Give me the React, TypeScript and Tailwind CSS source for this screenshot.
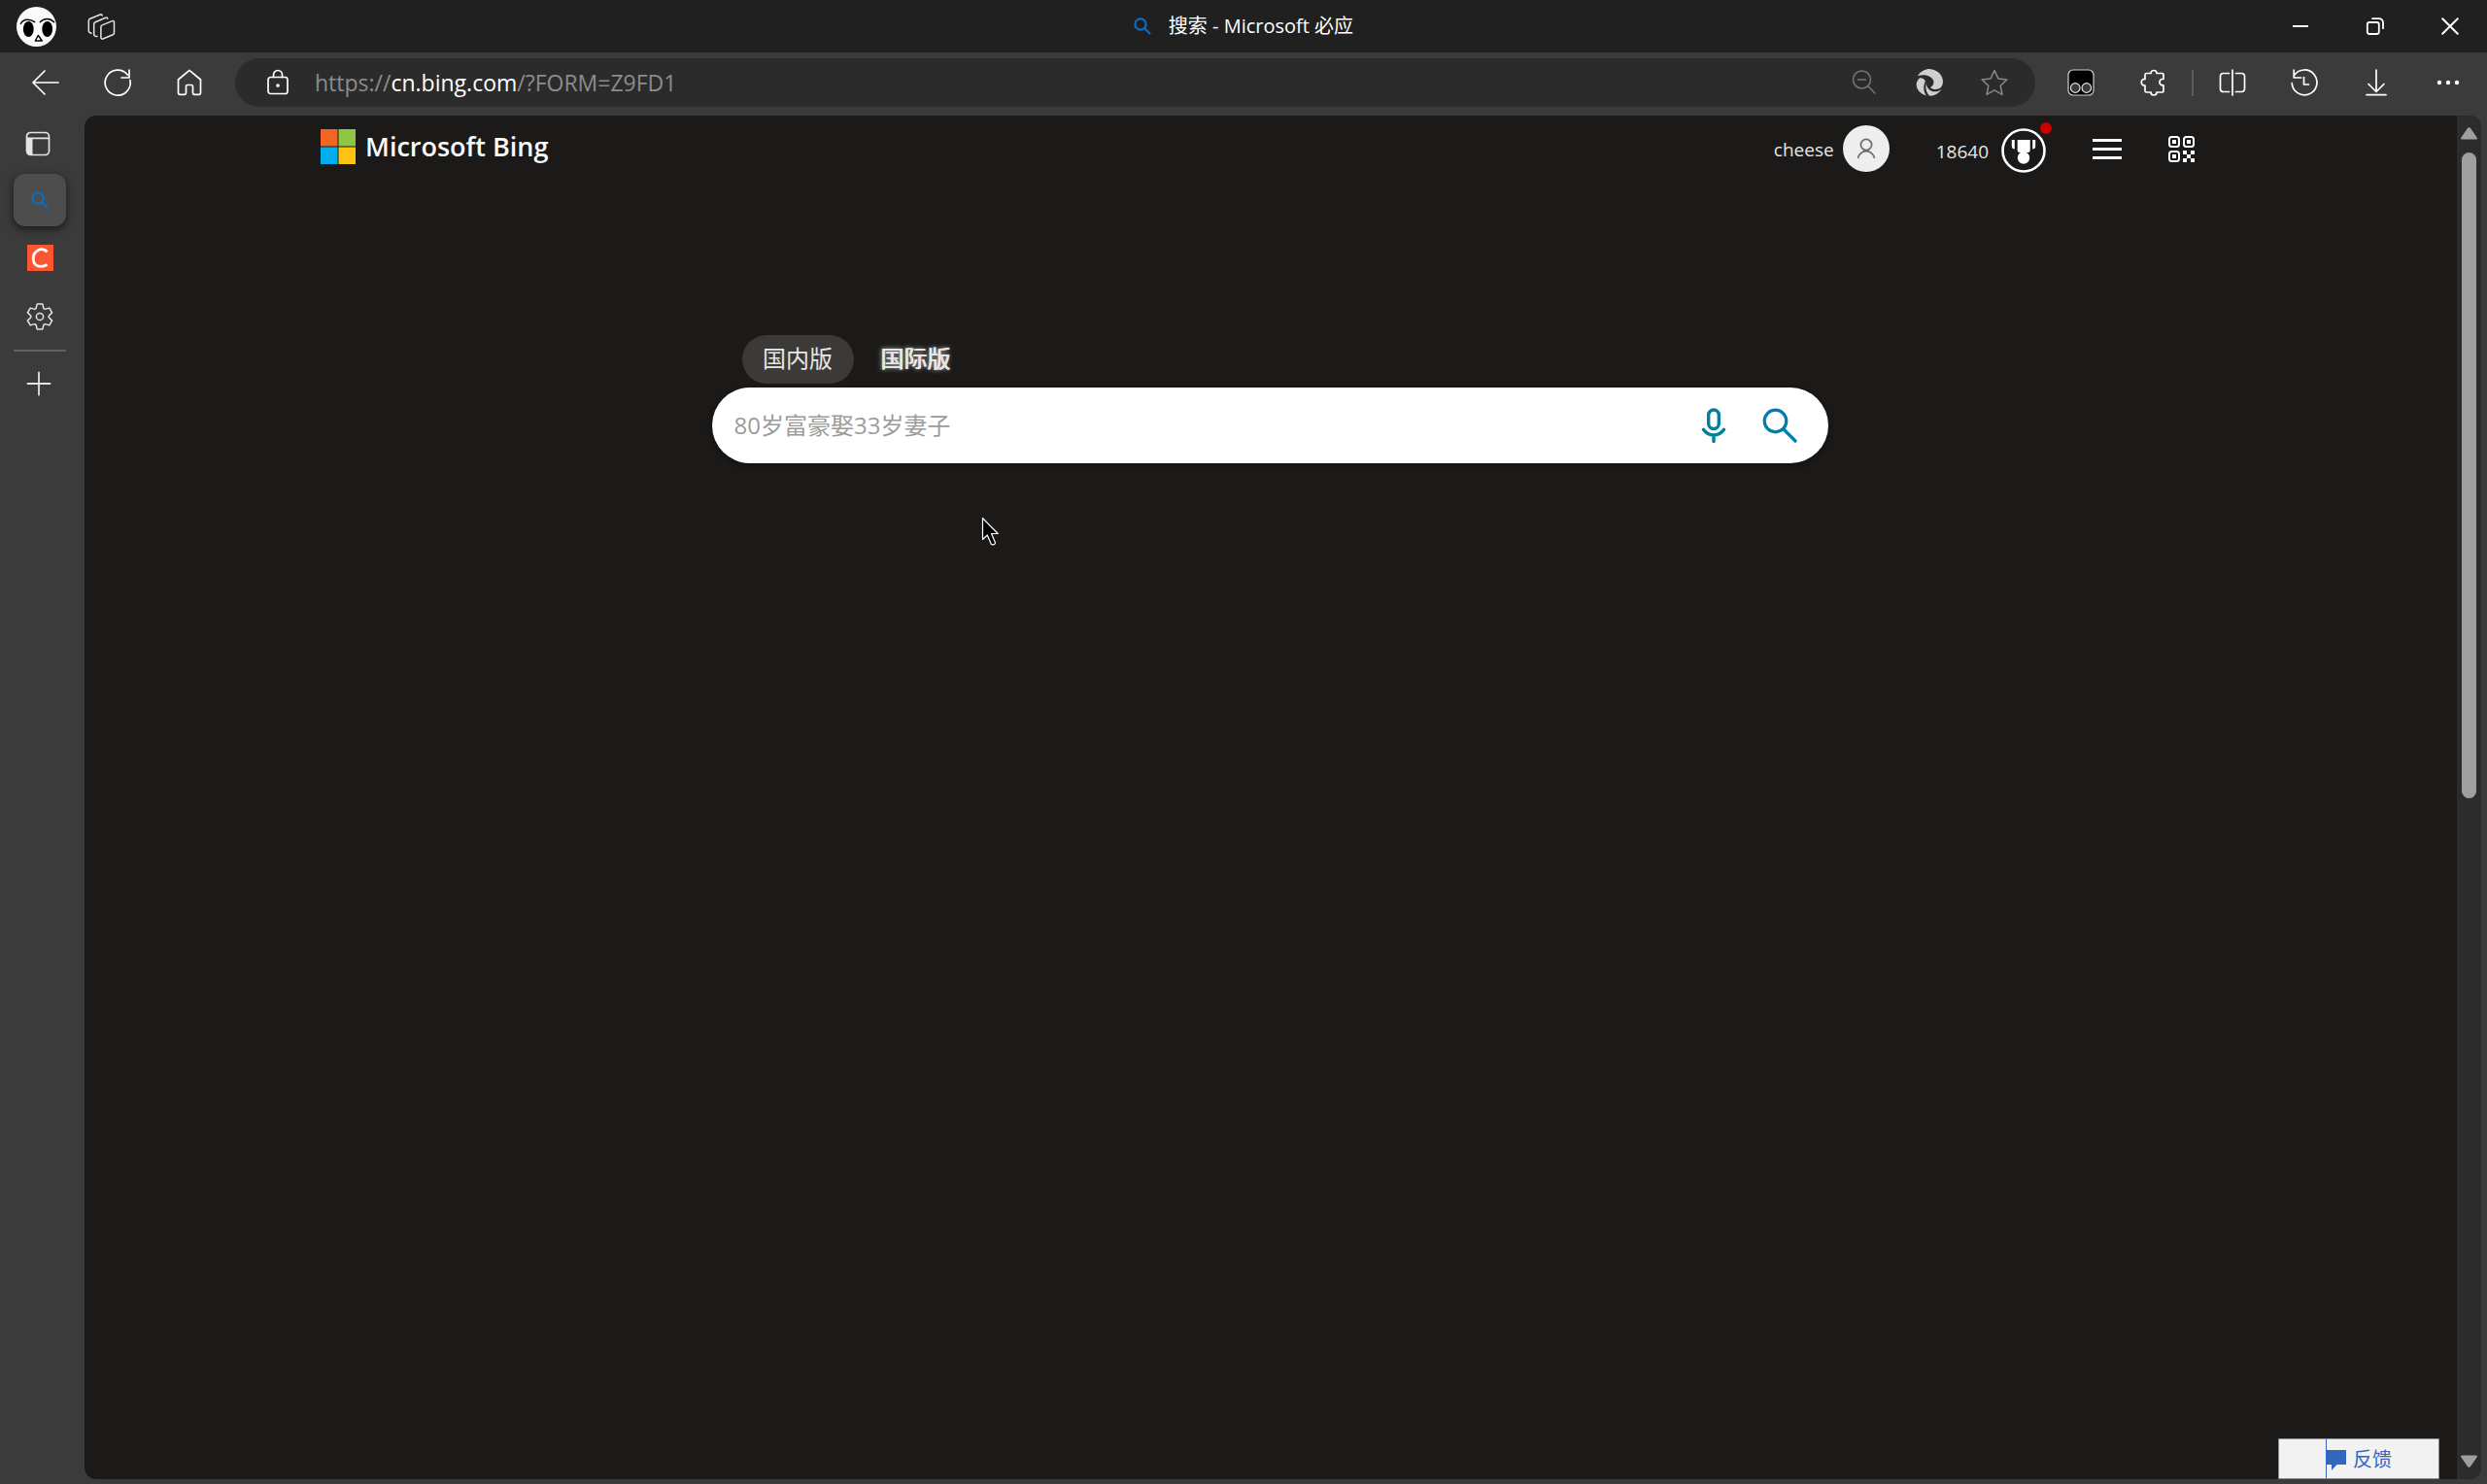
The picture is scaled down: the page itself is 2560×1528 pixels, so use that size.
import { useState } from 'react';
import type { ReactNode } from 'react';

type IconProps = {
  children: ReactNode;
  size?: string;
  box?: string;
  width?: number;
};

/** Line icon on a 28 unit grid, stroked in the current colour. */
function Icon({ children, size = 'size-7', box = '0 0 28 28', width = 1.7 }: IconProps) {
  return (
    <svg
      className={`${size} shrink-0`}
      viewBox={box}
      fill="none"
      stroke="currentColor"
      strokeWidth={width}
      strokeLinecap="round"
      strokeLinejoin="round"
      aria-hidden="true"
    >
      {children}
    </svg>
  );
}

type ButtonProps = { label: string; className: string; children: ReactNode };

function IconButton({ label, className, children }: ButtonProps) {
  return (
    <button
      type="button"
      aria-label={label}
      className={`flex shrink-0 items-center justify-center ${className}`}
    >
      {children}
    </button>
  );
}

function BlueSearch() {
  return (
    <span className="text-[#0f6cbd]">
      <Icon size="size-[18px]" box="0 0 18 18" width={2.2}>
        <circle cx="7" cy="7" r="5.6" />
        <path d="m11.2 11.2 5.3 5.3" />
      </Icon>
    </span>
  );
}

function TitleBar() {
  return (
    <header className="grid h-[54px] shrink-0 grid-cols-[1fr_auto_1fr] items-center bg-[#202020]">
      <div className="flex items-center gap-8 pl-[17px]">
        <button type="button" aria-label="Profile">
          <svg className="size-[41px]" viewBox="0 0 41 41" aria-hidden="true">
            <circle cx="20.5" cy="20.5" r="20.5" fill="#fafafa" />
            <ellipse cx="12.3" cy="23" rx="5.4" ry="8" />
            <ellipse cx="31.7" cy="23" rx="5.4" ry="8" />
            <g fill="none" stroke="#000" strokeWidth="1.4" strokeLinecap="round">
              <path d="M4.3 17.5c2.5-5.2 9-5.5 14.4-1.8M24.3 15.7c4-4.2 10-4.5 14.3 0" />
              <path d="m22.3 29.5-3 5.500h7Z" strokeLinejoin="round" />
            </g>
          </svg>
        </button>
        <IconButton label="Workspaces" className="text-[#e2e2e2]">
          <Icon size="size-[29px]" box="0 0 29 29" width={1.5}>
            <path d="M15.2 12.9 25.5 8.6a1.400 1.400 0 0 1 2 1.300v11a2 2 0 0 1-1.300 1.900l-10.300 4.200a1.400 1.400 0 0 1-2-1.300V14.800a2 2 0 0 1 1.300-1.900Z" />
            <path d="M10 24.600 8.200 24.200a2 2 0 0 1-1.500-2V12a2.500 2.500 0 0 1 1.500-2.200L18.700 5.300a1.600 1.600 0 0 1 2.100.9" />
            <path d="M4 21.300 2.700 20.800a2 2 0 0 1-1.400-2V8.500a2.500 2.500 0 0 1 1.500-2.200L13.200 2a1.600 1.600 0 0 1 2.100.9" />
          </Icon>
        </IconButton>
      </div>
      <div className="flex items-center gap-[18px] text-[20px] leading-6 text-white">
        <BlueSearch />
        <h1>搜索 - Microsoft 必应</h1>
      </div>
      <div className="flex justify-end text-white">
        <IconButton label="Minimize" className="h-[54px] w-[77px]">
          <Icon size="size-5" box="0 0 20 20" width={2}>
            <path d="M2 10h16" strokeLinecap="butt" />
          </Icon>
        </IconButton>
        <IconButton label="Restore" className="h-[54px] w-[77px]">
          <Icon size="size-5" box="0 0 20 20" width={1.8}>
            <rect x="1.8" y="6" width="12" height="12" rx="2.2" />
            <path d="M7 2.200h7a4 4 0 0 1 4 4v6" />
          </Icon>
        </IconButton>
        <IconButton label="Close" className="h-[54px] w-[77px]">
          <Icon size="size-5" box="0 0 20 20" width={2}>
            <path d="m2.200 2.200 15.600 15.600M17.800 2.200 2.200 17.800" />
          </Icon>
        </IconButton>
      </div>
    </header>
  );
}

function AddressBar() {
  return (
    <div className="flex h-[50px] min-w-0 flex-1 items-center rounded-full bg-[#2b2b2b] pr-[9px] pl-[30px]">
      <IconButton label="Site information" className="text-white">
        <Icon>
          <rect x="4" y="8.5" width="20" height="17" rx="2.5" />
          <path d="M9.500 8.500V6a4.500 4.500 0 0 1 9 0v2.500" />
          <circle cx="14" cy="17" r="1" fill="currentColor" />
        </Icon>
      </IconButton>
      <div className="min-w-0 flex-1 truncate pl-6 text-[23px] leading-8 text-[#8c8c8c]">
        https://<span className="text-white">cn.bing.com</span>/?FORM=Z9FD1
      </div>
      <IconButton label="Zoom" className="w-[67px] text-[#767676]">
        <Icon width={1.5}>
          <circle cx="11.500" cy="11" r="9" />
          <path d="M7.500 11h8M18 17.800l7 7.200" />
        </Icon>
      </IconButton>
      <IconButton label="Refresh in original mode" className="w-[67px] text-[#cfcfcf]">
        <svg className="size-7" viewBox="0 0 27 27" fill="currentColor" aria-hidden="true">
          <path d="M2 7C5.500 1.500 10.500-.3 15 .2c7 .8 12 6.300 12 12.300 0 3.500-1.500 6-4 7-3 1.300-6.500.7-8.500-1 2.500-1.500 4-4 3-7C16 7.500 9.500 4.500 2 7Z" />
          <path d="M3.500 9.300C-2 14 .5 23.500 10.300 26.500 7.500 22 7.200 17 9.500 12 8 9.500 5.500 8.500 3.500 9.300Z" />
          <path d="M10.500 14.500c.2 4.500 4 8 8.500 8 2.500 0 4.800-1 6.500-2.500C23 24.500 18 27.200 13.300 26.600c-3-3.600-4-8-2.800-12.100Z" />
        </svg>
      </IconButton>
      <IconButton label="Add to favorites" className="w-[67px] text-[#8a8a8a]">
        <Icon width={1.5}>
          <path d="m14 1.500 3.900 8.400 9 1.100-6.700 6.300 1.800 9-8-4.500-8 4.500 1.800-9L1.100 11l9-1.100Z" />
        </Icon>
      </IconButton>
    </div>
  );
}

function Toolbar() {
  return (
    <nav className="flex h-[65px] shrink-0 items-center pr-[3px] pb-[3px] pl-[10px] text-white">
      <IconButton label="Back" className="w-[74px]">
        <Icon>
          <path d="M27 14H1M13 2 1 14l12 12" />
        </Icon>
      </IconButton>
      <IconButton label="Refresh" className="w-[74px]">
        <Icon>
          <path d="M26.900 11.500A13 13 0 1 1 24.300 6M26 1v8h-8" />
        </Icon>
      </IconButton>
      <IconButton label="Home" className="mr-[10px] w-[74px]">
        <Icon>
          <path d="M2.500 11 14 1.300 25.500 11v13.800a1.500 1.500 0 0 1-1.500 1.500h-5a1.500 1.500 0 0 1-1.500-1.500V18a1.500 1.500 0 0 0-1.500-1.500h-4a1.500 1.500 0 0 0-1.500 1.500v6.800A1.500 1.500 0 0 1 9 26.300H4a1.500 1.500 0 0 1-1.500-1.500Z" />
        </Icon>
      </IconButton>
      <AddressBar />
      <IconButton label="Tampermonkey" className="ml-[10px] w-[74px]">
        <Icon width={1.2}>
          <rect x="1" y="1" width="26" height="26" rx="5" fill="#000" stroke="#d0d0d0" />
          <circle cx="8.200" cy="19.500" r="4.800" fill="#3b3b3b" stroke="#e5e5e5" />
          <circle cx="19.800" cy="19.500" r="4.800" fill="#3b3b3b" stroke="#e5e5e5" />
        </Icon>
      </IconButton>
      <IconButton label="Extensions" className="w-[74px]">
        <Icon>
          <path d="M7.500 4.500H12a3 3 0 0 1 6 0h5.500A1.500 1.500 0 0 1 25 6v4.300h-.8a3.300 3.300 0 0 0 0 6.600h.8v5.600a1.500 1.500 0 0 1-1.500 1.500H18a3 3 0 0 1-6 0H7.500A1.500 1.500 0 0 1 6 22.500V17h-.5a3.300 3.300 0 0 1 0-6.600H6V6a1.500 1.500 0 0 1 1.500-1.500Z" />
        </Icon>
      </IconButton>
      <div className="mx-[3px] h-[27px] w-0.5 bg-[#5c5c5c]" />
      <IconButton label="Split screen" className="w-[74px]">
        <Icon>
          <path d="M10.500 4.500h-6a3 3 0 0 0-3 3v13a3 3 0 0 0 3 3h6M17.500 4.500h6a3 3 0 0 1 3 3v13a3 3 0 0 1-3 3h-6M14 1v26" />
        </Icon>
      </IconButton>
      <IconButton label="History" className="w-[74px]">
        <Icon>
          <path d="M1.200 14.500A12.900 12.900 0 1 0 3.500 6.500M3.200 1v8h7.500M13.500 8.500V16h5" />
        </Icon>
      </IconButton>
      <IconButton label="Downloads" className="w-[74px]">
        <Icon>
          <path d="M14 1v22M6 15.500l8 8 8-8M4 26.700h20" />
        </Icon>
      </IconButton>
      <IconButton label="Settings and more" className="w-[74px]">
        <Icon width={0}>
          <g fill="currentColor">
            <circle cx="5" cy="14" r="2.200" />
            <circle cx="14" cy="14" r="2.200" />
            <circle cx="23" cy="14" r="2.200" />
          </g>
        </Icon>
      </IconButton>
    </nav>
  );
}

function TabRail() {
  return (
    <aside className="flex w-[87px] shrink-0 flex-col pt-0.5 pl-[14px] text-[#e4e4e4]">
      <IconButton label="Tab actions" className="mb-1 h-[54px] w-[50px]">
        <Icon>
          <rect x="2.500" y="2.500" width="23" height="23" rx="4" />
          <path d="M3 8.300h22" />
          <path d="M2.500 8.300H8.500v17H6a3.500 3.500 0 0 1-3.500-3.500Z" fill="currentColor" stroke="none" />
        </Icon>
      </IconButton>
      <IconButton
        label="搜索 - Microsoft 必应"
        className="mb-[5px] size-[54px] rounded-xl bg-[#4d4d4d] shadow-[0_3px_8px_rgba(0,0,0,0.6)]"
      >
        <BlueSearch />
      </IconButton>
      <IconButton label="C" className="mb-[7px] size-[54px]">
        <svg className="size-[27px]" viewBox="0 0 27 27" aria-hidden="true">
          <rect width="27" height="27" fill="#fc5531" />
          <path
            d="M20.500 7.300C18.500 4.600 14.500 4 11.500 5.600 8 7.500 6 11 6.200 15c.3 4.500 3.500 7.400 8 7.300 2.300 0 4.500-.6 6.300-2"
            fill="none"
            stroke="#fff"
            strokeWidth="2.800"
          />
        </svg>
      </IconButton>
      <IconButton label="Settings" className="mb-[7px] size-[54px]">
        <Icon box="-14 -14 28 28" width={1.5}>
          <path d="M-2.800-12.900H2.800L4-8.300 5.200-7.600 9.800-8.900 12.600-4.100 9.200-.7V.7L12.600 4.100 9.800 8.900 5.200 7.600 4 8.300 2.800 12.900H-2.800L-4 8.300-5.200 7.600-9.800 8.900-12.600 4.100-9.200.7V-.7L-12.600-4.100-9.800-8.900-5.200-7.600-4-8.300Z" />
          <circle r="3.600" />
        </Icon>
      </IconButton>
      <div className="mb-1.5 h-0.5 w-[54px] bg-[#606060]" />
      <IconButton label="New tab" className="h-[54px] w-[52px]">
        <Icon width={1.8}>
          <path d="M14 2.500v23M2.500 14h23" />
        </Icon>
      </IconButton>
    </aside>
  );
}

function QrCorner({ x, y }: { x: number; y: number }) {
  return (
    <g transform={`translate(${x} ${y})`}>
      <rect x="1" y="1" width="10" height="10" rx="2.500" fill="none" stroke="currentColor" strokeWidth="2" />
      <rect x="4" y="4" width="4" height="4" fill="currentColor" />
    </g>
  );
}

function BingHeader() {
  return (
    <header className="flex h-[68px] shrink-0 items-center justify-between pr-[270px] pl-[243px] text-[#e6e6e6]">
      <a href="#bing" className="flex items-center gap-[10px] pb-1 text-[27px] leading-9 font-semibold text-[#fafafa]">
        <svg className="size-9" viewBox="0 0 36 36" aria-hidden="true">
          <rect width="17.500" height="17.500" fill="#f26522" />
          <rect x="18.500" width="17.500" height="17.500" fill="#8dc63f" />
          <rect y="18.500" width="17.500" height="17.500" fill="#00aeef" />
          <rect x="18.500" y="18.500" width="17.500" height="17.500" fill="#ffc20e" />
        </svg>
        Microsoft Bing
      </a>
      <div className="flex items-center gap-12 text-[19px] leading-6">
        <a href="#account" className="flex items-center gap-[9px]">
          <span className="pt-0.5">cheese</span>
          <svg className="size-12" viewBox="0 0 48 48" aria-hidden="true">
            <circle cx="24" cy="24" r="24" fill="#eee" />
            <g fill="none" stroke="#6b6b6b" strokeWidth="1.700">
              <circle cx="24" cy="20" r="5.600" />
              <path d="M15.500 34a8.600 8.600 0 0 1 17 0" />
            </g>
          </svg>
        </a>
        <a href="#rewards" className="relative flex items-center gap-[13px] pt-1">
          <span className="pt-0.5">18640</span>
          <svg className="size-[46px]" viewBox="0 0 46 46" aria-hidden="true">
            <circle cx="23" cy="23" r="21.500" fill="none" stroke="#fff" strokeWidth="2.600" />
            <g fill="#fff">
              <path d="M16.700 12h13v10.500a2.500 2.500 0 0 1-2.500 2.500h-8a2.500 2.500 0 0 1-2.500-2.500Z" />
              <circle cx="23" cy="30.500" r="6.200" />
              <path d="M10.800 12h3v9.500c-2 0-3-1-3-3ZM35.200 12h-3v9.500c2 0 3-1 3-3Z" />
            </g>
          </svg>
          <span className="absolute -top-0.5 -right-1.5 size-3 rounded-full bg-[#c80000]" />
        </a>
        <IconButton label="Menu" className="text-white">
          <svg className="h-[21px] w-[30px]" viewBox="0 0 30 21" fill="currentColor" aria-hidden="true">
            <path d="M0 0h30v3H0ZM0 9h30v3H0ZM0 18h30v3H0Z" />
          </svg>
        </IconButton>
        <IconButton label="QR code" className="text-white">
          <svg className="size-[27px]" viewBox="0 0 27 27" aria-hidden="true">
            <QrCorner x={0} y={0} />
            <QrCorner x={15} y={0} />
            <QrCorner x={0} y={15} />
            <path
              d="M15 15h4v4h4v-4h4v4h-4v4h4v4h-4v-4h-4v4h-4v-4h4v-4h-4Z"
              fill="currentColor"
            />
          </svg>
        </IconButton>
      </div>
    </header>
  );
}

function SearchArea() {
  const [query, setQuery] = useState('');

  return (
    <section className="flex flex-col items-center pt-[158px] pr-0.5">
      <div className="w-full max-w-[1149px]">
        <div className="mb-1 flex gap-1.5 pl-[31px] text-[24px] leading-8 text-[#e8e6e3]">
          <button type="button" className="h-[50px] w-[115px] rounded-full bg-[#3b3a39] pb-0.5">
            国内版
          </button>
          <button
            type="button"
            className="h-[50px] w-[115px] pb-0.5 [text-shadow:0_0_5px_rgba(255,255,255,0.8),1px_0_0_#e8e6e3]"
          >
            国际版
          </button>
        </div>
        <form
          className="flex h-[78px] items-center rounded-[39px] bg-white pr-8 pl-[23px] shadow-[0_2px_6px_rgba(0,0,0,0.4)]"
          onSubmit={(e) => e.preventDefault()}
        >
          <input
            type="text"
            aria-label="Search"
            value={query}
            onChange={(e) => setQuery(e.target.value)}
            placeholder="80岁富豪娶33岁妻子"
            className="min-w-0 flex-1 bg-transparent text-[24px] leading-8 text-black outline-none placeholder:text-[#9b9b9b]"
          />
          <IconButton label="Search by voice" className="mr-8 text-[#00809d]">
            <Icon size="size-9" box="0 0 36 36" width={3.4}>
              <rect x="12.700" y="2" width="10.600" height="19.500" rx="5.300" />
              <path d="M7.500 22.300c5.200 7.600 15.800 7.600 21 0M18 28v6.500" />
            </Icon>
          </IconButton>
          <button type="submit" aria-label="Search the web" className="text-[#007daa]">
            <Icon size="size-9" box="0 0 36 36" width={3.2}>
              <circle cx="13.500" cy="13.500" r="11.300" />
              <path d="m22 22 12 12" />
            </Icon>
          </button>
        </form>
      </div>
    </section>
  );
}

function Pointer() {
  return (
    <svg
      className="pointer-events-none absolute top-[413px] left-[923px] h-[31px] w-5"
      viewBox="0 0 20 31"
      aria-hidden="true"
    >
      <path
        d="M1.500 1.500v22l4.800-4.500 4 9.300c1.800 1.300 4.200.3 4.200-1.500L10.500 17.500h6.800Z"
        stroke="#fff"
        strokeWidth="1.200"
        strokeLinejoin="round"
      />
    </svg>
  );
}

function ScrollRail() {
  return (
    <div className="flex w-[25px] shrink-0 flex-col items-center bg-[#2c2c2c] py-3 text-[#9f9f9f]">
      <svg className="h-[13px] w-[17px] shrink-0" viewBox="0 0 17 13" fill="currentColor" aria-hidden="true">
        <path d="M6.800 1.200a2 2 0 0 1 3.400 0l6.500 9.500a1.200 1.200 0 0 1-1 1.900H1.300a1.200 1.200 0 0 1-1-1.900Z" />
      </svg>
      <div className="mt-[13px] mb-3 flex w-full min-h-0 flex-1 justify-center">
        <div className="h-1/2 w-[15px] rounded-full bg-[#9f9f9f]" />
      </div>
      <svg className="h-[13px] w-[17px] shrink-0" viewBox="0 0 17 13" fill="currentColor" aria-hidden="true">
        <path d="M6.800 11.800a2 2 0 0 0 3.400 0l6.500-9.500a1.200 1.200 0 0 0-1-1.900H1.300a1.200 1.200 0 0 0-1 1.900Z" />
      </svg>
    </div>
  );
}

export default function App() {
  return (
    <div className="flex h-screen flex-col bg-[#3b3b3b] font-['Open_Sans','Noto_Sans_CJK_SC',sans-serif]">
      <TitleBar />
      <Toolbar />
      <div className="flex min-h-0 flex-1 pr-1.5 pb-[5px]">
        <TabRail />
        <div className="flex min-w-0 flex-1 overflow-hidden rounded-xl bg-[#1b1a19]">
          <main className="relative min-w-0 flex-1">
            <BingHeader />
            <SearchArea />
            <Pointer />
            <button
              type="button"
              className="absolute right-[18px] bottom-0 flex h-[42px] w-[166px] border border-[#8a8a8a] bg-[#f2f2f2] pl-12 text-[20px] text-[#3566bd]"
            >
              <span className="flex h-full items-center gap-[7px] border-l border-[#3566bd] pt-0.5">
                <svg className="h-[21px] w-5" viewBox="0 0 20 21" fill="currentColor" aria-hidden="true">
                  <path d="M0 0h20v15h-9.500L5 21v-6H0Z" />
                </svg>
                反馈
              </span>
            </button>
          </main>
          <ScrollRail />
        </div>
      </div>
    </div>
  );
}
